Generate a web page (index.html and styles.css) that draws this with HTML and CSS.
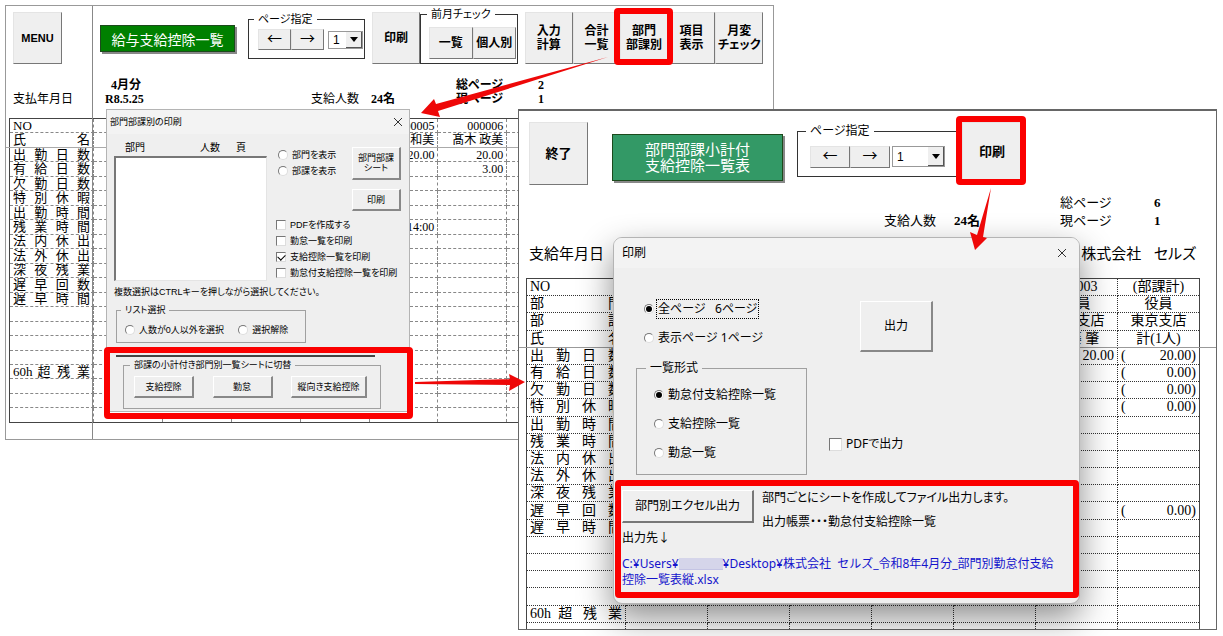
FILE: index.html
```html
<!DOCTYPE html>
<html lang="ja">

<head>
    <meta charset="UTF-8">
    <meta name="viewport" content="width=device-width, initial-scale=1.0">
    <title>部門部課別の印刷</title>
    <link rel="stylesheet" href="styles.css">
</head>

<body>
    <div class="desktop">
        <!-- 給与支給控除一覧 -->
        <section class="sheet sheet-list">
            <div class="toolbar">
                <div class="corner"><button class="tool menu">MENU</button></div>
                <h1 class="title">給与支給控除一覧</h1>
                <fieldset class="group pager">
                    <legend>ページ指定</legend>
                    <button class="tool arrow">←</button>
                    <button class="tool arrow">→</button>
                    <label class="combo">
                        <select aria-label="ページ"><option>1</option></select>
                        <span class="drop"></span>
                    </label>
                </fieldset>
                <button class="tool print">印刷</button>
                <fieldset class="group check">
                    <legend>前月チェック</legend>
                    <button class="tool">一覧</button>
                    <button class="tool">個人別</button>
                </fieldset>
                <div class="tool-set">
                    <button class="tool">入力<br>計算</button>
                    <button class="tool">合計<br>一覧</button>
                    <button class="tool">部門<br>部課別</button>
                    <button class="tool">項目<br>表示</button>
                    <button class="tool">月変<br>チェック</button>
                </div>
            </div>
            <div class="info">
                <span></span><b class="month">4月分</b><span></span><span></span><b>総ページ</b><b>2</b>
                <span>支払年月日</span><b>R8.5.25</b><span>支給人数</span><b>24名</b><b>現ページ</b><b>1</b>
            </div>
            <table class="grid" id="list-table"></table>
        </section>

        <!-- 部門部課別の印刷 -->
        <section class="dialog dialog-dept">
            <div class="dialog-title">
                <span>部門部課別の印刷</span>
                <button class="close" aria-label="閉じる"><svg viewBox="0 0 10 10"><path d="M1 1l8 8M9 1l-8 8"/></svg></button>
            </div>
            <div class="dept-body">
                <div class="dept-top">
                    <div class="dept-left">
                        <div class="list-head"><span>部門</span><span>人数</span><span>頁</span></div>
                        <div class="list-box"></div>
                    </div>
                    <div class="dept-right">
                        <div class="dept-show">
                            <div class="opts">
                                <label><input type="radio" name="show">部門を表示</label>
                                <label><input type="radio" name="show">部課を表示</label>
                            </div>
                            <div class="dept-btns">
                                <button class="btn tall">部門部課<br>シート</button>
                                <button class="btn">印刷</button>
                            </div>
                        </div>
                        <div class="opts">
                            <label><input type="checkbox">PDFを作成する</label>
                            <label><input type="checkbox">勤怠一覧を印刷</label>
                            <label><input type="checkbox" checked>支給控除一覧を印刷</label>
                            <label><input type="checkbox">勤怠付支給控除一覧を印刷</label>
                        </div>
                    </div>
                </div>
                <p class="hint">複数選択はCTRLキーを押しながら選択してください。</p>
                <fieldset class="group pick">
                    <legend>リスト選択</legend>
                    <label><input type="radio" name="pick">人数が0人以外を選択</label>
                    <label><input type="radio" name="pick">選択解除</label>
                </fieldset>
                <hr class="rule">
                <fieldset class="group switch">
                    <legend>部課の小計付き部門別一覧シートに切替</legend>
                    <button class="btn">支給控除</button>
                    <button class="btn">勤怠</button>
                    <button class="btn wide">縦向き支給控除</button>
                </fieldset>
            </div>
        </section>

        <!-- 部門部課小計付 支給控除一覧表 -->
        <section class="sheet sheet-sub">
            <div class="toolbar">
                <button class="tool exit">終了</button>
                <h1 class="title">部門部課小計付<br>支給控除一覧表</h1>
                <fieldset class="group pager">
                    <legend>ページ指定</legend>
                    <button class="tool arrow">←</button>
                    <button class="tool arrow">→</button>
                    <label class="combo">
                        <select aria-label="ページ"><option>1</option></select>
                        <span class="drop"></span>
                    </label>
                </fieldset>
                <button class="tool print">印刷</button>
            </div>
            <div class="info">
                <span></span><b></b><span>総ページ</span><b>6</b>
                <span>支給人数</span><b>24名</b><span>現ページ</span><b>1</b>
            </div>
            <div class="company"><span>支給年月日</span><span>株式会社&nbsp;&nbsp; セルズ</span></div>
            <table class="grid" id="sub-table"></table>
        </section>

        <!-- 印刷 -->
        <section class="dialog dialog-print">
            <div class="dialog-title">
                <span>印刷</span>
                <button class="close" aria-label="閉じる"><svg viewBox="0 0 10 10"><path d="M1 1l8 8M9 1l-8 8"/></svg></button>
            </div>
            <div class="print-top">
                <div class="print-left">
                    <div class="opts">
                        <label><input type="radio" name="range" checked><span class="focus">全ページ&nbsp;&nbsp; 6ページ</span></label>
                        <label><input type="radio" name="range"><span>表示ページ 1ページ</span></label>
                    </div>
                    <fieldset class="group opts">
                        <legend>一覧形式</legend>
                        <label><input type="radio" name="form" checked>勤怠付支給控除一覧</label>
                        <label><input type="radio" name="form">支給控除一覧</label>
                        <label><input type="radio" name="form">勤怠一覧</label>
                    </fieldset>
                </div>
                <div class="print-right">
                    <button class="btn output">出力</button>
                    <label><input type="checkbox">PDFで出力</label>
                </div>
            </div>
            <div class="export">
                <div class="export-row">
                    <button class="btn">部門別エクセル出力</button>
                    <div class="export-note">
                        <p>部門ごとにシートを作成してファイル出力します。</p>
                        <p>出力帳票・・・勤怠付支給控除一覧</p>
                    </div>
                </div>
                <p class="dest">出力先↓</p>
                <p class="path">C:¥Users¥<span class="mask"></span>¥Desktop¥株式会社&nbsp; セルズ_令和8年4月分_部門別勤怠付支給<br>控除一覧表縦.xlsx</p>
            </div>
        </section>

        <!-- 赤枠と矢印 -->
        <svg class="marks" width="1223" height="636" viewBox="0 0 1223 636">
            <g class="frame">
                <rect x="617" y="11" width="53" height="51" rx="1"/>
                <rect x="107" y="350" width="303" height="66" rx="1"/>
                <rect x="959" y="119" width="64" height="63" rx="1"/>
                <rect x="618" y="483" width="458" height="112" rx="1"/>
            </g>
            <g class="pointer">
                <path d="M608 57L436 104L434 99L421 113L440 117L438 111Z"/>
                <path d="M415 382L510 379L509 374L525 382L509 391L510 385L415 384Z"/>
                <path d="M991 188L977 235L970 232L975 250L987 238L983 237Z"/>
            </g>
        </svg>
    </div>
    <script>
    // 行見出し
    var items = ['出 勤 日 数', '有 給 日 数', '欠 勤 日 数', '特 別 休 暇', '出 勤 時 間', '残 業 時 間',
        '法 内 休 出', '法 外 休 出', '深 夜 残 業', '遅 早 回 数', '遅 早 時 間', '', '', '', '', '60h 超 残 業'
    ];

    // 表を作成する。cells は「行,列」をキーにした値
    function makeTable(id, labels, cols, heads, cells) {
        var table = document.getElementById(id);
        for (var r = 0; r < labels.length; r++) {
            var tr = table.insertRow();
            if (r < heads) {
                tr.className = 'head';
            }
            var th = document.createElement('th');
            th.textContent = labels[r] || '\u00a0';
            if (labels[r] == 'NO') {
                th.className = 'no';
            }
            tr.appendChild(th);
            for (var c = 1; c <= cols; c++) {
                var td = tr.insertCell();
                var value = cells[r + ',' + c] || '';
                if (value.charAt(0) == '(' && r >= heads) {
                    // 小計のカッコは左右に分ける
                    td.innerHTML = '<div class="sum"><span>(</span><span>' + value.slice(1) + '</span></div>';
                } else {
                    td.textContent = value;
                }
            }
        }
    }

    makeTable('list-table', ['NO', '氏 名'].concat(items, ['', '', '']), 8, 2, {
        '0,5': '000005',
        '1,5': '山本 和美',
        '2,5': '20.00',
        '7,5': '14:00',
        '0,6': '000006',
        '1,6': '髙木 政美',
        '2,6': '20.00',
        '3,6': '3.00',
        '1,7': '伊藤 直子'
    });

    makeTable('sub-table', ['NO', '部 門', '部 課', '氏 名'].concat(items, ['']), 7, 4, {
        '0,6': '000003',
        '1,6': '役員',
        '2,6': '東京支店',
        '3,6': '佐藤 肇',
        '4,6': '20.00',
        '0,7': '(部課計)',
        '1,7': '役員',
        '2,7': '東京支店',
        '3,7': '計(1人)',
        '4,7': '(20.00)',
        '5,7': '(0.00)',
        '6,7': '(0.00)',
        '7,7': '(0.00)',
        '13,7': '(0.00)'
    });
    </script>
</body>

</html>
```

FILE: styles.css
```css
* {
    box-sizing: border-box;
}

body,
h1,
p,
fieldset,
legend {
    margin: 0;
    padding: 0;
}

body {
    background-color: #fff;
    color: #000;
    font-family: "Liberation Sans", "Noto Sans CJK JP", sans-serif;
    font-size: 12px;
    font-feature-settings: "palt";
}

button,
select {
    margin: 0;
    padding: 0;
    font: inherit;
    color: inherit;
    border-radius: 0;
    font-feature-settings: inherit;
}

.desktop {
    position: relative;
    min-height: 636px;
    overflow: hidden;
}

/* シート */

.sheet {
    position: absolute;
    overflow: hidden;
    background-color: #fff;
}

.toolbar {
    display: flex;
    align-items: flex-start;
}

.tool {
    background-color: #efefef;
    border: 1px solid #e4e4e4;
    border-right-color: #777;
    border-bottom-color: #777;
    font-weight: bold;
    line-height: 14px;
}

.title {
    display: flex;
    align-items: center;
    justify-content: center;
    border: 1px solid #1c4a1c;
    box-shadow: 2px 2px 0 #888;
    color: #fff;
    font-weight: normal;
    text-align: center;
}

.group {
    min-width: 0;
    border: 1px solid #a0a0a0;
}

.group legend {
    padding: 0 4px;
    line-height: 12px;
}

.pager {
    display: flex;
    border-color: #333;
}

.pager legend {
    margin-left: -4px;
}

.check legend {
    margin-left: -2px;
}

.arrow {
    padding-bottom: 4px;
    font-family: "Noto Sans CJK JP", sans-serif;
    font-size: 15px;
    font-weight: normal;
}

.combo {
    display: flex;
    border: 1px solid #999;
    background-color: #fff;
}

.combo select {
    flex: 1;
    min-width: 0;
    padding-left: 4px;
    border: 0;
    background: none;
    appearance: none;
}

.drop {
    display: flex;
    align-items: center;
    justify-content: center;
    width: 16px;
    background-color: #efefef;
    border-right: 1px solid #555;
    border-bottom: 1px solid #555;
}

.drop::after {
    content: "";
    border: 4px solid transparent;
    border-top: 5px solid #000;
    border-bottom: 0;
}

.info {
    display: grid;
    align-content: start;
    font-family: "Liberation Serif", "Noto Sans CJK JP", serif;
}

/* 表 */

.grid {
    border-collapse: collapse;
    table-layout: fixed;
    border: 1px solid #444;
    font-family: "Liberation Serif", "Noto Sans CJK JP", serif;
}

.grid th,
.grid td {
    padding: 0 3px;
    border: 1px dashed #888;
    font-weight: normal;
    white-space: nowrap;
    overflow: hidden;
}

.grid th {
    text-align: justify;
    text-align-last: justify;
}

.grid .no {
    text-align-last: left;
}

.grid td {
    text-align: right;
}

.sum {
    display: flex;
    justify-content: space-between;
}

/* 給与支給控除一覧 */

.sheet-list {
    left: 5px;
    top: 5px;
    width: 769px;
    height: 435px;
    border: 1px solid #999;
}

/* ウィンドウ枠の固定線 */

.sheet-list::before {
    content: "";
    position: absolute;
    top: 0;
    bottom: 0;
    left: 86px;
    border-left: 1px solid #888;
}

.sheet-list::after {
    content: "";
    position: absolute;
    left: 0;
    right: 0;
    top: 141px;
    border-top: 1px solid #aaa;
}

.sheet-list .toolbar {
    height: 72px;
    padding-top: 6px;
}

.corner {
    width: 94px;
    padding-left: 7px;
}

.menu {
    width: 49px;
    height: 52px;
    font-size: 11px;
}

.sheet-list .title {
    width: 135px;
    height: 27px;
    margin: 13px 13px 0 0;
    background-color: #008000;
    font-size: 14px;
}

.sheet-list .pager {
    width: 117px;
    height: 46px;
    margin: 1px 7px 0 0;
    padding: 4px 0 0 9px;
}

.sheet-list legend {
    font-size: 11px;
}

.sheet-list .arrow {
    width: 33px;
    height: 21px;
}

.sheet-list .combo {
    width: 35px;
    height: 18px;
    margin: 2px 0 0 4px;
}

.sheet-list .print {
    width: 48px;
    height: 52px;
}

.check {
    display: flex;
    width: 98px;
    height: 56px;
    margin: -4px 7px 0 0;
    padding: 7px 0 0 8px;
    border-color: #333;
}

.check .tool {
    flex: 1;
    height: 32px;
}

.check .tool:last-child {
    margin-right: 1px;
}

.tool-set {
    display: grid;
    grid-template-columns: repeat(5, 1fr);
    width: 238px;
    height: 52px;
}

.sheet-list .info {
    grid-template-columns: 92px 206px 60px 85px 82px auto;
    padding-left: 7px;
    height: 40px;
    line-height: 14px;
}

.month {
    padding-left: 6px;
}

#list-table {
    width: 636px;
    height: 305px;
    margin-left: 3px;
    font-size: 12px;
    line-height: 12px;
}

#list-table td,
#list-table th {
    height: 14px;
}

#list-table th {
    width: 84px;
    font-size: 13px;
}

/* 部門部課小計付 支給控除一覧表 */

.sheet-sub {
    left: 518px;
    top: 109px;
    width: 699px;
    height: 521px;
    border: 1px solid #666;
    border-top-width: 2px;
}

.sheet-sub::after {
    content: "";
    position: absolute;
    left: 0;
    right: 0;
    top: 236px;
    border-top: 1px solid #999;
}

.sheet-sub .toolbar {
    height: 83px;
    padding: 11px 0 0 10px;
}

.exit {
    width: 59px;
    height: 63px;
    margin-right: 24px;
    font-size: 13px;
}

.sheet-sub .title {
    width: 171px;
    height: 47px;
    margin: 12px 14px 0 0;
    background-color: #339966;
    font-size: 15px;
    line-height: 16px;
}

.sheet-sub .pager {
    width: 165px;
    height: 52px;
    margin-top: 3px;
    padding: 9px 0 0 12px;
}

.sheet-sub .arrow {
    width: 40px;
    height: 22px;
}

.sheet-sub .combo {
    width: 53px;
    height: 21px;
    margin-left: 2px;
}

.sheet-sub .print {
    width: 60px;
    height: 60px;
    font-size: 13px;
}

.sheet-sub .info {
    grid-template-columns: 70px 106px 94px 56px;
    justify-content: end;
    padding-right: 6px;
    height: 50px;
    font-size: 13px;
    line-height: 18px;
}

.company {
    display: flex;
    justify-content: space-between;
    height: 34px;
    padding: 0 20px 0 10px;
    font-size: 15px;
    line-height: 20px;
}

#sub-table {
    width: 674px;
    height: 362px;
    margin-left: 7px;
    font-size: 14px;
    line-height: 14px;
}

#sub-table th {
    width: 99px;
}

#sub-table td,
#sub-table th {
    height: 17px;
    border-style: dotted;
    border-color: #333;
}

#sub-table .head td {
    text-align: center;
}

/* ダイアログ */

.dialog {
    position: absolute;
    background-color: #efefef;
    border: 1px solid #b4b4b4;
}

.dialog-title {
    display: flex;
    align-items: center;
    justify-content: space-between;
    background-color: #f3f3f3;
}

.close {
    display: flex;
    border: 0;
    background: none;
}

.close svg {
    width: 10px;
    height: 10px;
    fill: none;
    stroke: #333;
    stroke-width: 1;
}

.btn {
    background-color: #efefef;
    border: 1px solid #fff;
    border-right: 2px solid #888;
    border-bottom: 2px solid #888;
}

.dialog label {
    display: flex;
    align-items: center;
    white-space: nowrap;
}

.dialog input {
    display: flex;
    align-items: center;
    justify-content: center;
    flex: none;
    width: 10px;
    height: 10px;
    margin: 0 4px 0 0;
    appearance: none;
    background-color: #fff;
    border: 1px solid #777;
    border-right-color: #ddd;
    border-bottom-color: #ddd;
}

.dialog input[type="radio"] {
    border-radius: 50%;
}

.dialog input[type="radio"]:checked::before {
    content: "";
    width: 6px;
    height: 6px;
    border-radius: 50%;
    background-color: #000;
}

.dialog input[type="checkbox"]:checked::before {
    content: "";
    width: 6px;
    height: 4px;
    margin-bottom: 2px;
    border: solid #000;
    border-width: 0 0 1px 1px;
    transform: rotate(-45deg);
}

/* 部門部課別の印刷 */

.dialog-dept {
    left: 106px;
    top: 109px;
    width: 304px;
    height: 303px;
    font-size: 9px;
    line-height: 12px;
}

.dialog-dept .dialog-title {
    height: 24px;
    padding: 0 6px 0 3px;
}

.dept-body {
    padding: 8px 8px 0 7px;
}

.dept-top {
    display: flex;
    justify-content: space-between;
}

.dept-left {
    width: 153px;
}

.list-head {
    display: grid;
    grid-template-columns: 75px 36px auto;
    padding-left: 11px;
    height: 14px;
    font-size: 10px;
}

.list-box {
    height: 125px;
    background-color: #fff;
    border: 2px solid #777;
    border-right: 1px solid #e4e4e4;
    border-bottom: 1px solid #e4e4e4;
}

.dept-right {
    width: 125px;
}

.dept-show {
    display: flex;
    justify-content: space-between;
    height: 75px;
    padding: 5px 0 0 2px;
}

.dept-right label {
    height: 16px;
}

.dept-btns {
    width: 49px;
    line-height: 10px;
}

.dept-btns .btn {
    width: 100%;
    height: 22px;
}

.dept-btns .tall {
    height: 33px;
    margin-bottom: 9px;
}

.hint {
    margin-top: 5px;
}

.pick {
    display: flex;
    gap: 14px;
    width: 190px;
    height: 39px;
    margin: 6px 0 0 2px;
    padding: 2px 0 0 8px;
}

.rule {
    height: 2px;
    width: 259px;
    margin: 12px 0 0 2px;
    border: 0;
    background-color: #444;
}

.switch {
    display: flex;
    justify-content: space-between;
    width: 258px;
    height: 50px;
    margin: 2px 0 0 9px;
    padding: 5px 13px 0 10px;
}

.pick legend,
.switch legend {
    margin-left: -4px;
}

.switch .btn {
    width: 60px;
    height: 22px;
}

.switch .wide {
    width: 76px;
}

/* 印刷 */

.dialog-print {
    left: 613px;
    top: 237px;
    width: 467px;
    height: 367px;
    border-radius: 9px;
    box-shadow: 0 14px 34px rgba(0, 0, 0, .45);
    font-family: "Noto Sans", "Noto Sans CJK JP", sans-serif;
    line-height: 16px;
}

.dialog-print .dialog-title {
    height: 30px;
    padding: 0 12px 0 8px;
    border-radius: 8px 8px 0 0;
}

.print-top {
    display: flex;
    gap: 22px;
    height: 214px;
    padding: 26px 0 6px 22px;
}

.print-left {
    width: 171px;
}

.print-left label {
    height: 29px;
}

.print-left > .opts:first-child {
    padding-left: 8px;
}

.focus {
    outline: 1px dotted #000;
    outline-offset: 1px;
}

.print-left .group {
    height: 113px;
    margin-top: 10px;
    padding: 6px 0 0 17px;
}

.print-left legend {
    margin-left: -8px;
}

.print-right {
    display: flex;
    flex-direction: column;
    justify-content: space-between;
    padding: 7px 0 24px;
}

.print-right input {
    width: 13px;
    height: 13px;
}

.output {
    width: 73px;
    height: 51px;
    margin-left: 31px;
}

.export {
    padding: 8px 8px 0;
}

.export-row {
    display: flex;
    gap: 8px;
    height: 40px;
}

.export-row .btn {
    width: 132px;
    height: 33px;
    border-right-color: #777;
    border-bottom-color: #777;
}

.export-note p {
    height: 24px;
}

.dest {
    margin-bottom: 10px;
}

.path {
    color: #1414cc;
    white-space: nowrap;
    font-feature-settings: normal;
}

.mask {
    display: inline-block;
    width: 44px;
    height: 12px;
    vertical-align: -2px;
    background-color: #d5d5ea;
    border-bottom: 1px solid #c4c4e4;
}

/* 赤枠と矢印 */

.marks {
    position: absolute;
    left: 0;
    top: 0;
    pointer-events: none;
}

.frame {
    fill: none;
    stroke: #fb0000;
    stroke-width: 6;
}

.pointer {
    fill: #ee0808;
}
```
